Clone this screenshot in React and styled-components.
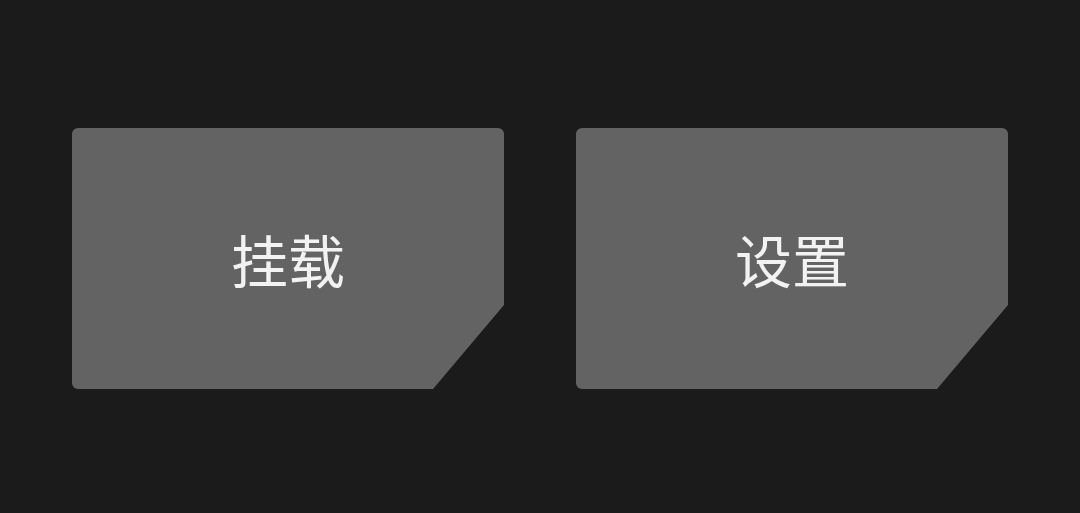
import React from "react";
import styled, { createGlobalStyle } from "styled-components";

const Global = createGlobalStyle`
  html, body { margin: 0; padding: 0; background: #1b1b1b; }
  body { font-family: "Noto Sans CJK SC", "Noto Sans", sans-serif; }
`;

const Page = styled.div`
  width: 1080px;
  height: 513px;
  box-sizing: border-box;
  padding: 128px 72px 124px;
  display: flex;
  gap: 72px;
  background: #1b1b1b;
`;

const Card = styled.button`
  flex: 1;
  height: 261px;
  border: none;
  margin: 0;
  padding: 0;
  background: #636363;
  border-radius: 6px;
  clip-path: polygon(0 0, 100% 0, 100% 177px, 361px 100%, 0 100%);
  display: flex;
  align-items: center;
  justify-content: center;
  color: #f2f2f2;
  font-family: "Noto Sans CJK SC", "Noto Sans", sans-serif;
  font-size: 57px;
  font-weight: 400;
  line-height: 1;
  cursor: pointer;
`;

export default function App() {
  return (
    <>
      <Global />
      <Page>
        <Card>挂载</Card>
        <Card>设置</Card>
      </Page>
    </>
  );
}
